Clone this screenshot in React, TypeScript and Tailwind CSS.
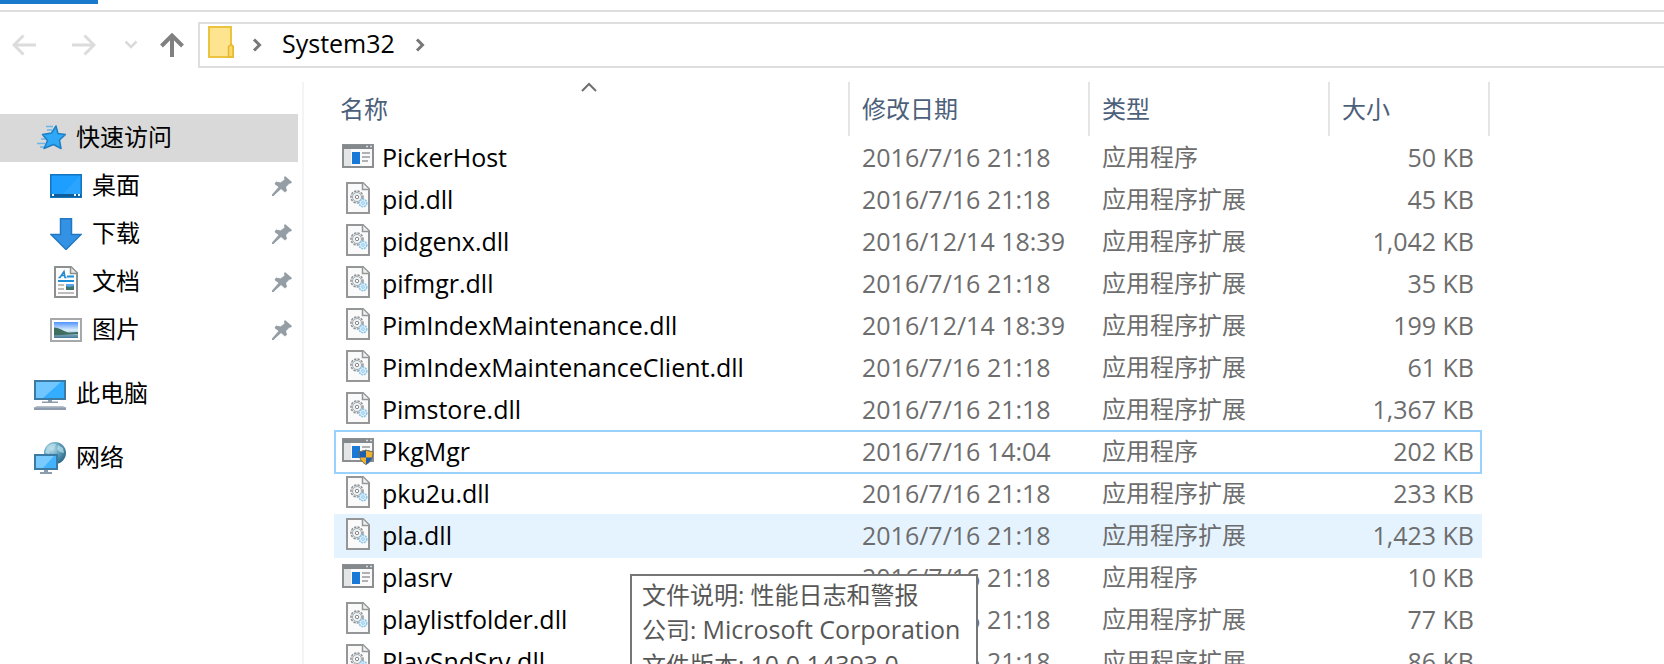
import { useState } from "react";

type FileKind = "app" | "appShield" | "dll";

interface FileEntry {
  name: string;
  kind: FileKind;
  date: string;
  size: string;
}

const files: FileEntry[] = [
  { name: "PickerHost", kind: "app", date: "2016/7/16 21:18", size: "50 KB" },
  { name: "pid.dll", kind: "dll", date: "2016/7/16 21:18", size: "45 KB" },
  { name: "pidgenx.dll", kind: "dll", date: "2016/12/14 18:39", size: "1,042 KB" },
  { name: "pifmgr.dll", kind: "dll", date: "2016/7/16 21:18", size: "35 KB" },
  { name: "PimIndexMaintenance.dll", kind: "dll", date: "2016/12/14 18:39", size: "199 KB" },
  { name: "PimIndexMaintenanceClient.dll", kind: "dll", date: "2016/7/16 21:18", size: "61 KB" },
  { name: "Pimstore.dll", kind: "dll", date: "2016/7/16 21:18", size: "1,367 KB" },
  { name: "PkgMgr", kind: "appShield", date: "2016/7/16 14:04", size: "202 KB" },
  { name: "pku2u.dll", kind: "dll", date: "2016/7/16 21:18", size: "233 KB" },
  { name: "pla.dll", kind: "dll", date: "2016/7/16 21:18", size: "1,423 KB" },
  { name: "plasrv", kind: "app", date: "2016/7/16 21:18", size: "10 KB" },
  { name: "playlistfolder.dll", kind: "dll", date: "2016/7/16 21:18", size: "77 KB" },
  { name: "PlaySndSrv.dll", kind: "dll", date: "2016/7/16 21:18", size: "86 KB" },
];

/* ===== ICONS ===== */

const StarIcon = () => (
  <svg viewBox="0 0 32 32" className="size-8 shrink-0" aria-hidden="true">
    <path d="M12 4.500h7M13 8h5M7 17h5M3 21.500h8M6 25h4" stroke="#6bb4e8" strokeWidth="1.500" />
    <path
      d="M22 4L24 11.500L31.500 12.500L25.500 18L27 26.500L19.500 22.500L10 26.500L13.500 18.500L8.500 12.500L17.500 11Z"
      fill="#2ea8f7"
      stroke="#1e7fc4"
      strokeWidth="1.500"
      strokeLinejoin="round"
    />
  </svg>
);

const DesktopIcon = () => (
  <svg viewBox="0 0 32 32" className="size-8 shrink-0" aria-hidden="true">
    <rect x="0.750" y="4.750" width="30.500" height="22.500" fill="#1e9fff" stroke="#1177c0" strokeWidth="1.500" />
    <path d="M30 6v18H13z" fill="#2ba4ff" />
    <path d="M1 24h30v3H1z" fill="#0e5c98" />
    <path d="M2 24h2v2H2zM24 24h2v2h-2zM28 24h2v2h-2z" fill="#e8f5ff" />
  </svg>
);

const DownloadIcon = () => (
  <svg viewBox="0 0 32 32" className="size-8 shrink-0" aria-hidden="true">
    <path d="M10.500 0.750h11V16.500H31L16 31.500L1 16.500h9.500z" fill="#3392e3" stroke="#2278c4" strokeWidth="1.500" />
  </svg>
);

const DocumentIcon = () => (
  <svg viewBox="0 0 32 32" className="size-8 shrink-0" aria-hidden="true">
    <path d="M5 1h16l6 6v24H5z" fill="#fdfdfd" stroke="#8d9091" strokeWidth="2" />
    <path d="M20.500 1v6.500H27" fill="#e6e6e6" stroke="#8d9091" strokeWidth="1.500" />
    <path d="M8.500 11.500h1.500L14 5.500l1 6h1.500M11.500 9.500h3" fill="none" stroke="#1f86cf" strokeWidth="1.500" />
    <path d="M17 10.500h7M8 15h16" stroke="#1b8fd8" strokeWidth="2" />
    <path d="M8 19h6M8 23h6M8 27h16" stroke="#a8a8a8" strokeWidth="1.500" />
    <path d="M16 18h8v3h-8z" fill="#5aa5ec" />
    <path d="M16 20l3 1 5-1v4h-8z" fill="#3f7466" />
  </svg>
);

const PictureIcon = () => (
  <svg viewBox="0 0 32 32" className="size-8 shrink-0" aria-hidden="true">
    <defs>
      <linearGradient id="sky" x1="0" y1="0" x2="0" y2="1">
        <stop offset="0" stopColor="#4f93ff" />
        <stop offset="0.5" stopColor="#d9ecfa" />
        <stop offset="0.75" stopColor="#9fc3d4" />
        <stop offset="1" stopColor="#3d7295" />
      </linearGradient>
    </defs>
    <rect x="1" y="5" width="30" height="22" fill="#fff" stroke="#a6a8a9" strokeWidth="2" />
    <rect x="4" y="8" width="24" height="16" fill="url(#sky)" />
    <path d="M4 13.500c6 0 10 4.500 15 5l9-.5v2l-24 1.500z" fill="#3f6d60" />
    <path d="M4 22h24" stroke="#5c8aa3" />
  </svg>
);

const ComputerIcon = () => (
  <svg viewBox="0 0 32 32" className="size-8 shrink-0" aria-hidden="true">
    <rect x="1" y="3" width="30" height="18" fill="#33adff" stroke="#3b7ba3" strokeWidth="2" />
    <path d="M2 4h25L9 20H2z" fill="#70c6ff" />
    <path d="M14 22h4v1.500h6v1.500H8v-1.500h6z" fill="#8b9dad" />
    <path d="M3 28h26l3 1.500V30H0v-.5z" fill="#b4bfca" />
    <path d="M0 29.500h32V32H0z" fill="#8e9cae" />
  </svg>
);

const NetworkIcon = () => (
  <svg viewBox="0 0 32 32" className="size-8 shrink-0" aria-hidden="true">
    <defs>
      <radialGradient id="globe" cx="0.35" cy="0.3" r="0.8">
        <stop offset="0" stopColor="#c4e3ee" />
        <stop offset="0.5" stopColor="#5b9db9" />
        <stop offset="1" stopColor="#24617f" />
      </radialGradient>
    </defs>
    <circle cx="21" cy="11" r="11" fill="url(#globe)" />
    <path d="M13 5c3-3 7-4 9-3l-2 5-4 1-1 4-4-1zM24 3l5 3 1 5-4-1-3-3z" fill="#b5dcea" opacity="0.75" />
    <rect x="1" y="13" width="22" height="14" fill="#42b4ff" stroke="#3b7ba3" strokeWidth="2" />
    <path d="M2 14h18L9 26H2z" fill="#78caff" />
    <path d="M10 28h4v2h4v2H6v-2h4z" fill="#8b9dad" />
  </svg>
);

const PinIcon = () => (
  <svg viewBox="0 0 20 20" className="size-5 shrink-0" aria-hidden="true">
    <path
      d="M13 0L20 6L19 7.500H17.500L14 11L15 14.500L13 16.500L9 13L1.500 20L0 20L0 18.500L6.500 11L2.500 8L4 5.500L8.500 6.500L12.500 3.500L12 1.500Z"
      fill="#949ea4"
    />
  </svg>
);

const FolderIcon = () => (
  <svg viewBox="0 0 26 32" className="mt-0.5 h-8 w-[26px] shrink-0 self-start" aria-hidden="true">
    <path d="M1 1h22v17.500l2 2V31H1z" fill="#ffe48f" stroke="#ecc33e" strokeWidth="2" />
    <path d="M20.500 31V20.500L23 18.500L25 20.500V31z" fill="#fbd968" stroke="#e6b82f" strokeWidth="1.500" />
  </svg>
);

const AppIcon = ({ shield = false }: { shield?: boolean }) => (
  <svg viewBox="0 0 32 32" className="size-8 shrink-0" aria-hidden="true">
    <rect x="1" y="5" width="30" height="22" fill="#fafafa" stroke="#8b8f92" strokeWidth="2" />
    <path d="M1 5h30v4H1z" fill="#83888c" />
    <path d="M2 9h7v17H2z" fill="#e3e5e7" />
    <path d="M24 6.500h2M28 6.500h2" stroke="#d8dadb" strokeWidth="1.500" />
    <path d="M10 12h8v12h-8z" fill="#1a78d6" />
    <path d="M20 13h8M20 17h8M20 21h6" stroke="#97999b" strokeWidth="1.500" />
    {shield && (
      <g>
        <path d="M17 17.500c3 0 5-.5 7-1.500c2 1 4 1.500 7 1.500c0 7-2 10-7 13c-5-3-7-6-7-13z" fill="#f3b02d" />
        <path d="M17 17.500c3 0 5-.5 7-1.500v7.500h-6.500c-.4-2-.5-4-.5-6zM24 23.500h6.500c-1 3.500-3 5.500-6.500 7z" fill="#1b5fb4" />
        <path d="M17 17.500c3 0 5-.5 7-1.500c2 1 4 1.500 7 1.500c0 7-2 10-7 13c-5-3-7-6-7-13z" fill="none" stroke="#6c6a5c" />
      </g>
    )}
  </svg>
);

const DllIcon = () => (
  <svg viewBox="0 0 32 32" className="size-8 shrink-0" aria-hidden="true">
    <path d="M5 1h16l6 6v24H5z" fill="#fafafa" stroke="#949697" strokeWidth="2" />
    <path d="M20.500 1v6.500H27" fill="#f0f0f0" stroke="#949697" strokeWidth="1.500" />
    <circle cx="15" cy="15" r="6" fill="#f1f3f4" stroke="#8d9397" strokeWidth="1.500" strokeDasharray="2.400 1.100" />
    <circle cx="15" cy="15" r="4.500" fill="none" stroke="#a3a8ab" />
    <circle cx="15" cy="15" r="1.700" fill="#fff" stroke="#858a8e" />
    <circle cx="21" cy="21" r="3.800" fill="#d9effc" stroke="#8ec4e6" strokeWidth="1.500" strokeDasharray="2 0.800" />
    <circle cx="21" cy="21" r="1.300" fill="#fff" stroke="#8ec4e6" />
  </svg>
);

const ChevronIcon = () => (
  <svg viewBox="0 0 10 14" className="h-3.5 w-2.5 shrink-0" aria-hidden="true">
    <path d="M2 1.500L7.500 7L2 12.500" fill="none" stroke="#777" strokeWidth="3" />
  </svg>
);

const FileIcon = ({ kind }: { kind: FileKind }) => {
  if (kind === "dll") return <DllIcon />;
  return <AppIcon shield={kind === "appShield"} />;
};

/* ===== TOP BAR ===== */

const AddressBar = () => (
  <header className="border-t-2 border-[#dedede] pt-2.5 pl-3 flex items-center">
    <button aria-label="返回">
      <svg viewBox="0 0 24 22" className="h-[22px] w-6 block" fill="none" stroke="#dcdcdc" strokeWidth="3">
        <path d="M24 11H2M11.500 1.500L2 11l9.500 9.500" />
      </svg>
    </button>
    <button aria-label="前进" className="ml-9">
      <svg viewBox="0 0 24 22" className="h-[22px] w-6 block" fill="none" stroke="#dcdcdc" strokeWidth="3">
        <path d="M0 11h22M12.500 1.500L22 11l-9.500 9.500" />
      </svg>
    </button>
    <button aria-label="最近浏览的位置" className="ml-7">
      <svg viewBox="0 0 16 10" className="h-2.5 w-4 block" fill="none" stroke="#dadada" strokeWidth="2.500">
        <path d="M1.500 1.500L7 7l5.500-5.500" />
      </svg>
    </button>
    <button aria-label="上移" className="ml-5">
      <svg viewBox="0 0 24 24" className="size-6 block" fill="none" stroke="#808080" strokeWidth="4">
        <path d="M12 24V3M1.500 13L12 2.500L22.500 13" />
      </svg>
    </button>
    <nav className="ml-3.5 flex h-[46px] flex-1 items-center border-2 border-r-0 border-[#dedede] pl-2">
      <FolderIcon />
      <span className="ml-[18px]">
        <ChevronIcon />
      </span>
      <a href="#system32" className="ml-5 pb-1 text-[25px] leading-8 text-black">
        System32
      </a>
      <button aria-label="展开" className="ml-5">
        <ChevronIcon />
      </button>
    </nav>
  </header>
);

/* ===== SIDEBAR ===== */

const quickItems = [
  { label: "桌面", icon: <DesktopIcon /> },
  { label: "下载", icon: <DownloadIcon /> },
  { label: "文档", icon: <DocumentIcon /> },
  { label: "图片", icon: <PictureIcon /> },
];

const Sidebar = () => (
  <aside className="w-[304px] shrink-0 border-r-2 border-[#f4f4f4] pt-8 pr-1 text-[24px] leading-8 text-black">
    <a href="#quick" className="flex h-12 items-center gap-2.5 bg-[#d9d9d9] pl-[34px]">
      <StarIcon />
      <span className="pb-0.5">快速访问</span>
    </a>
    {quickItems.map((item) => (
      <a key={item.label} href="#quick" className="flex h-12 items-center gap-2.5 pr-1.5 pl-[50px]">
        {item.icon}
        <span className="flex-1 pb-0.5">{item.label}</span>
        <PinIcon />
      </a>
    ))}
    <a href="#computer" className="mt-4 flex h-12 items-center gap-2.5 pl-[34px]">
      <ComputerIcon />
      <span className="pb-0.5">此电脑</span>
    </a>
    <a href="#network" className="mt-4 flex h-12 items-center gap-2.5 pl-[34px]">
      <NetworkIcon />
      <span className="pb-0.5">网络</span>
    </a>
  </aside>
);

/* ===== FILE LIST ===== */

const FileTable = () => {
  const [focused, setFocused] = useState("PkgMgr");
  const hovered = "pla.dll";

  return (
    <table className="w-full max-w-[1156px] table-fixed border-separate border-spacing-0 text-left text-[#6d6d6d]">
      <colgroup>
        <col />
        <col className="w-60" />
        <col className="w-60" />
        <col className="w-[152px]" />
        <col className="w-2" />
      </colgroup>
      <thead>
        <tr className="h-[54px] text-[24px] leading-8 text-[#4c607a]">
          <th className="relative border-r-2 border-[#e5e5e5] pl-1.5 font-normal">
            名称
            <span className="absolute inset-x-0 top-0 flex justify-center pr-1">
              <svg viewBox="0 0 16 10" className="h-2.5 w-4" fill="none" stroke="#6f6f6f" strokeWidth="2">
                <path d="M1 9l7-7 7 7" />
              </svg>
            </span>
          </th>
          <th className="border-r-2 border-[#e5e5e5] pl-3 font-normal">修改日期</th>
          <th className="border-r-2 border-[#e5e5e5] pl-3 font-normal">类型</th>
          <th colSpan={2} className="border-r-2 border-[#e5e5e5] pl-3 font-normal">
            大小
          </th>
        </tr>
      </thead>
      <tbody>
        {files.map((file) => {
          const isFocused = file.name === focused;
          let first = "";
          let middle = "";
          let last = "";
          if (isFocused) {
            first = "shadow-[inset_2px_2px_0_#99d1ff,0_2px_0_#99d1ff]";
            middle = "shadow-[inset_0_2px_0_#99d1ff,0_2px_0_#99d1ff]";
            last = "shadow-[inset_-2px_2px_0_#99d1ff,0_2px_0_#99d1ff]";
          } else if (file.name === hovered) {
            first = middle = last = "bg-[#e5f3ff] shadow-[0_2px_0_#e5f3ff]";
          }

          return (
            <tr key={file.name} onClick={() => setFocused(file.name)} className="h-[42px] text-[25px] leading-8">
              <td className={`pb-0.5 ${first}`}>
                <div className="flex h-10 items-center gap-2 pl-2 whitespace-nowrap text-black">
                  <FileIcon kind={file.kind} />
                  <span className="pt-0.5">{file.name}</span>
                </div>
              </td>
              <td className={`pl-3 ${middle}`}>{file.date}</td>
              <td className={`pl-3 text-[24px] ${middle}`}>{file.kind === "dll" ? "应用程序扩展" : "应用程序"}</td>
              <td className={`pr-2 text-right ${last}`}>{file.size}</td>
              <td></td>
            </tr>
          );
        })}
      </tbody>
    </table>
  );
};

const FileTooltip = () => (
  <div
    role="tooltip"
    className="absolute top-[574px] left-[630px] border-2 border-[#767676] bg-white py-0.5 pr-4 pl-2.5 text-[24px] leading-[34px] whitespace-nowrap text-[#575757]"
  >
    <p>文件说明: 性能日志和警报</p>
    <p>
      公司: <span className="text-[25px]">Microsoft Corporation</span>
    </p>
    <p>
      文件版本: <span className="text-[25px]">10.0.14393.0</span>
    </p>
  </div>
);

export default function App() {
  return (
    <div className="relative flex h-screen flex-col overflow-hidden bg-white font-['Open_Sans','Noto_Sans_CJK_SC',sans-serif]">
      <div className="h-2.5 shrink-0">
        <div className="h-1 w-[98px] bg-[#1979ca]"></div>
      </div>
      <AddressBar />
      <main className="mt-3.5 flex min-h-0 flex-1">
        <Sidebar />
        <section className="min-w-0 flex-1 pl-[30px]">
          <FileTable />
        </section>
      </main>
      <FileTooltip />
    </div>
  );
}
